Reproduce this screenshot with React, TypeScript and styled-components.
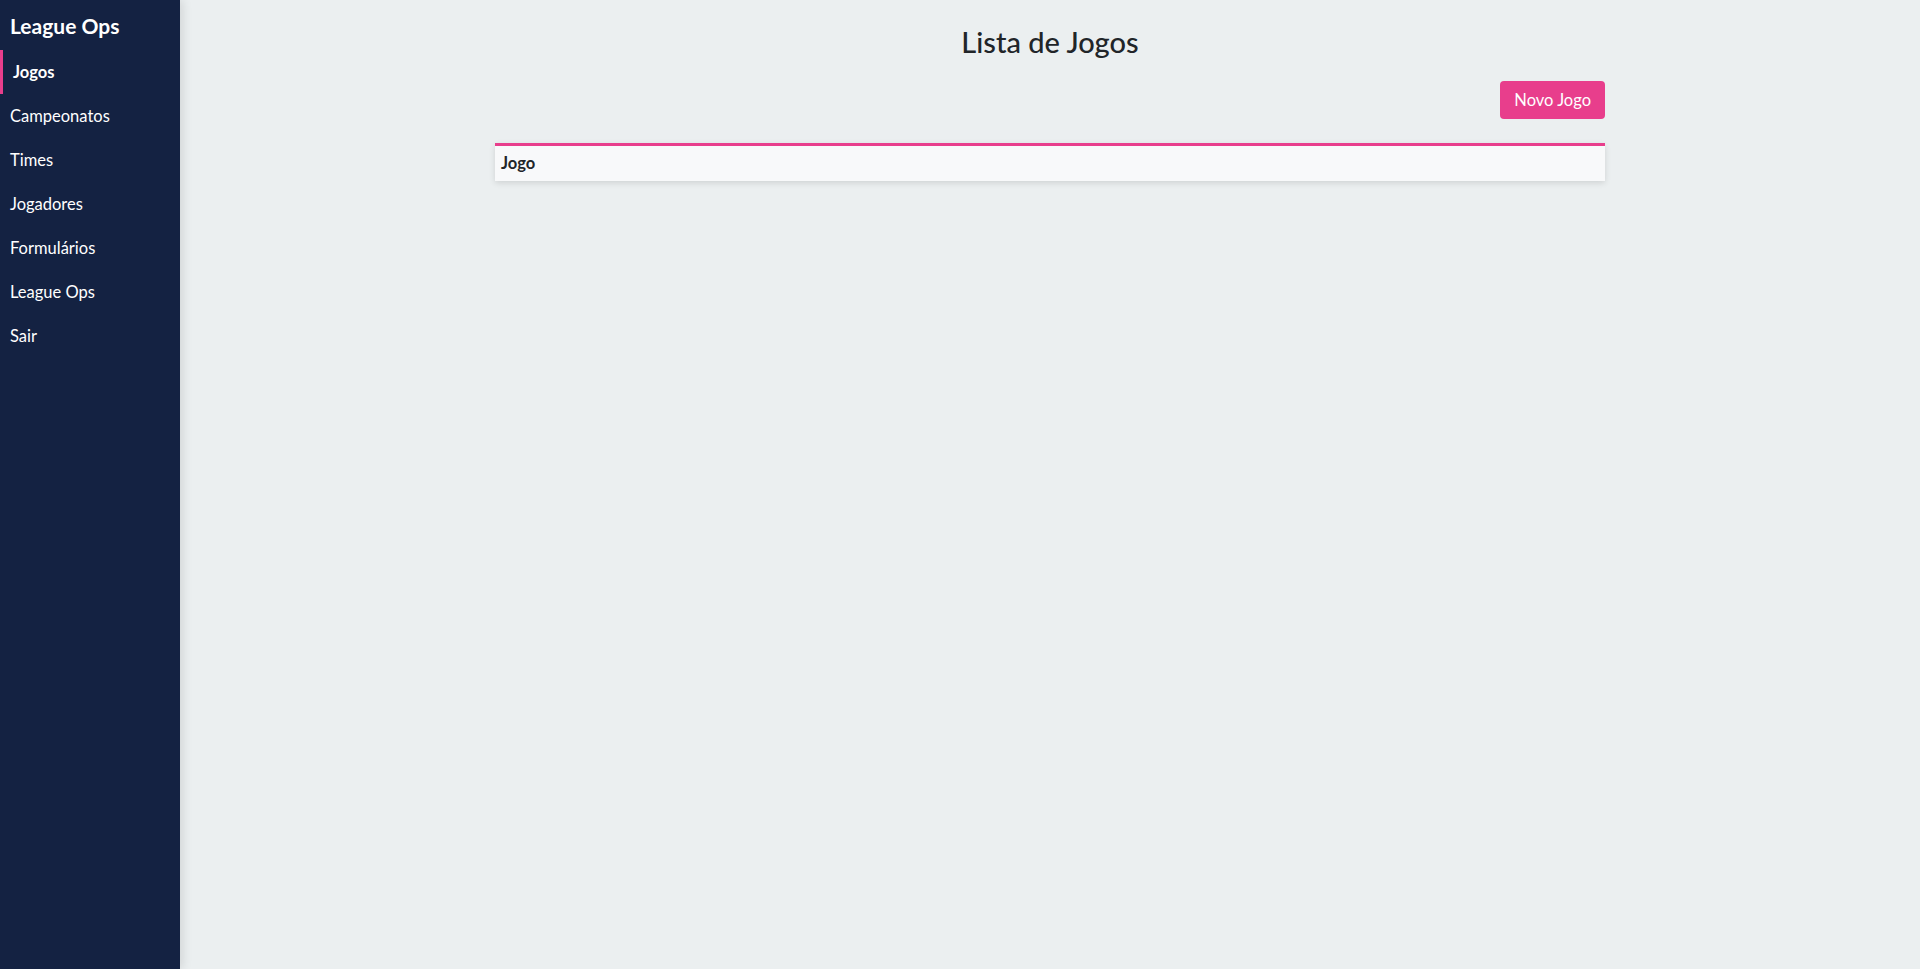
import React from 'react';
import styled, { createGlobalStyle } from 'styled-components';

const GlobalStyle = createGlobalStyle`
  html, body {
    margin: 0;
    padding: 0;
    height: 100%;
  }
  body {
    font-family: "Segoe UI", Lato, "Open Sans", sans-serif;
    color: #212529;
    background: #ebeff0;
  }
  * {
    box-sizing: border-box;
  }
`;

const Layout = styled.div`
  display: flex;
  height: 100vh;
  overflow: hidden;
`;

const Sidebar = styled.nav`
  width: 180px;
  flex-shrink: 0;
  background-color: #142242;
  color: #fff;
  box-shadow: 2px 0 10px rgba(0, 0, 0, 0.12);
  position: relative;
  z-index: 1;
`;

const Brand = styled.div`
  font-size: 21px;
  font-weight: 700;
  padding: 11px 10px 9px;
  line-height: 30px;
`;

const NavList = styled.ul`
  list-style: none;
  margin: 0;
  padding: 0;
`;

const NavItem = styled.li<{ $active?: boolean }>`
  height: 44px;
  display: flex;
  align-items: center;
  padding-left: 10px;
  border-left: ${(p) => (p.$active ? '3px solid #e83e8c' : 'none')};
  font-size: 16.5px;
  font-weight: ${(p) => (p.$active ? 700 : 400)};
  cursor: pointer;
`;

const Main = styled.main`
  flex: 1;
  padding: 22px 20px;
  display: flex;
  flex-direction: column;
  align-items: center;
`;

const Container = styled.div`
  width: 100%;
  max-width: 1110px;
`;

const Title = styled.h1`
  margin: 0;
  text-align: center;
  font-size: 29px;
  font-weight: 500;
  line-height: 40px;
`;

const Toolbar = styled.div`
  display: flex;
  justify-content: flex-end;
  margin-top: 19px;
`;

const Button = styled.button`
  background-color: #e83e8c;
  color: #fff;
  border: none;
  border-radius: 4px;
  height: 38px;
  padding: 0 14px;
  font-family: inherit;
  font-size: 16.5px;
  cursor: pointer;
`;

const Table = styled.table`
  width: 100%;
  margin-top: 24px;
  border-collapse: collapse;
  border-top: 3px solid #e83e8c;
  background: #f8f9fa;
  box-shadow: 0 2px 6px rgba(0, 0, 0, 0.12);
`;

const Th = styled.th`
  text-align: left;
  padding: 0 6px;
  height: 36px;
  font-size: 16.5px;
  font-weight: 700;
`;

const items = ['Jogos', 'Campeonatos', 'Times', 'Jogadores', 'Formulários', 'League Ops', 'Sair'];

const App: React.FC = () => {
  return (
    <>
      <GlobalStyle />
      <Layout>
        <Sidebar>
          <Brand>League Ops</Brand>
          <NavList>
            {items.map((item, i) => (
              <NavItem key={item} $active={i === 0}>
                {item}
              </NavItem>
            ))}
          </NavList>
        </Sidebar>
        <Main>
          <Container>
            <Title>Lista de Jogos</Title>
            <Toolbar>
              <Button>Novo Jogo</Button>
            </Toolbar>
            <Table>
              <thead>
                <tr>
                  <Th>Jogo</Th>
                </tr>
              </thead>
            </Table>
          </Container>
        </Main>
      </Layout>
    </>
  );
};

export default App;
